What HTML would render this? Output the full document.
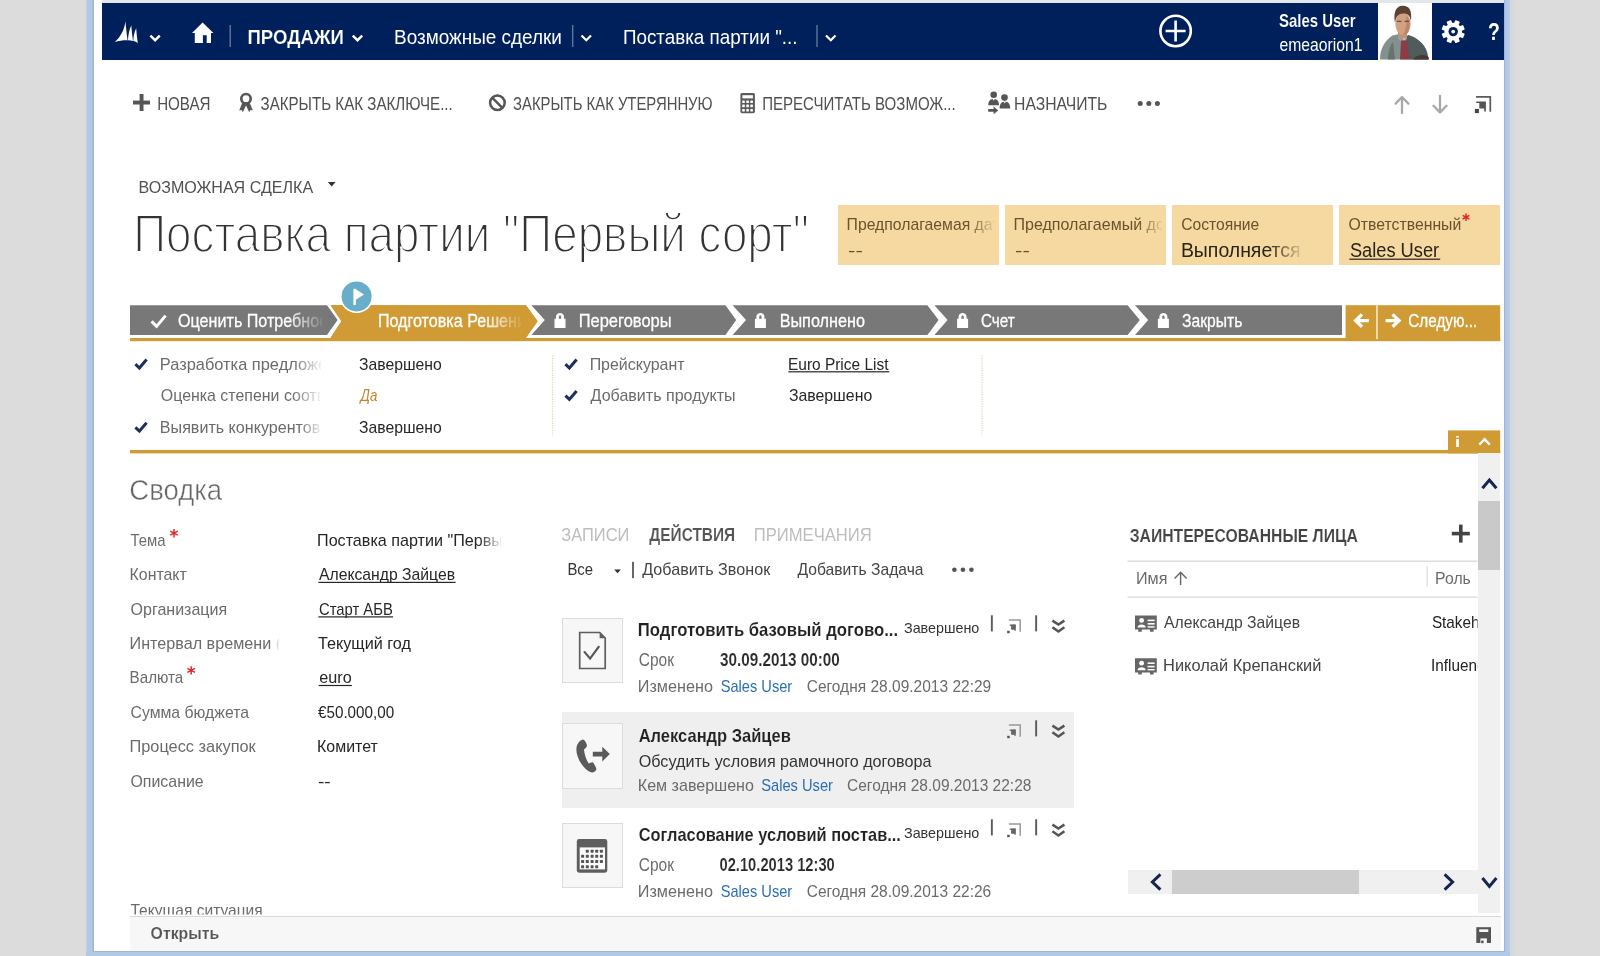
<!DOCTYPE html>
<html><head><meta charset="utf-8"><title>CRM</title>
<style>
html,body{margin:0;padding:0}
body{width:1600px;height:956px;overflow:hidden;position:relative;background:#dcdcdc;font-family:"Liberation Sans", sans-serif}
.b{position:absolute}
svg{position:absolute;overflow:visible}
text{white-space:pre}
</style></head><body>
<!-- window frame -->
<div class="b" style="left:86.4px;top:0;width:1424px;height:956px;background:linear-gradient(to right,#c3d2e6 0,#b2c8e7 1.6px,#b2c8e7 6.2px,#9fb6d3 6.8px,#9fb6d3 7.6px,#fff 7.6px,#fff 1417.9px,#9fb6d3 1417.9px,#9fb6d3 1419px,#b2c8e7 1419.6px,#b2c8e7 1423px,#c3d2e6 1424px)"></div>
<div class="b" style="left:1510.4px;top:0;width:7px;height:956px;background:linear-gradient(to right,#d3d7dd,#dcdcdc)"></div>
<div class="b" style="left:94px;top:0;width:1410.3px;height:950.6px;background:#fff"></div>
<div class="b" style="left:94px;top:950.6px;width:1410.3px;height:1.2px;background:#9fb6d3"></div>
<div class="b" style="left:86.4px;top:951.8px;width:1424px;height:4.2px;background:#b2c8e7"></div>
<div class="b" style="left:102px;top:0;width:1402px;height:3px;background:#e3e6ea"></div>
<!-- nav -->
<div class="b" style="left:102px;top:3px;width:1402px;height:56.6px;background:#00205b"></div>
<div class="b" style="left:1377.5px;top:3px;width:54.2px;height:56.6px;background:#fff"></div>
<svg id="nav" width="1600" height="70" style="left:0;top:0" viewBox="0 0 1600 70">
  <!-- logo sails -->
  <g fill="#fff">
    <path d="M125.4,21.2 C124.4,30 120.4,37 114.8,42 C119,40.8 124,40.2 127.6,40.4 C126.6,33 126,27 125.4,21.2 Z"/>
    <path d="M131.3,25.4 C129.2,29.4 128.2,35 128,40.3 C130,40.3 131.6,40.5 133,40.9 C132.2,35 131.7,30 131.3,25.4 Z"/>
    <path d="M136.2,28.2 C134.2,32 133.4,37 133.3,41.1 C135,41.5 136.4,42.1 137.8,43.2 C137,38 136.5,33 136.2,28.2 Z"/>
  </g>
  <polyline points="150.4,35.6 155.1,40.2 159.8,35.6" fill="none" stroke="#fff" stroke-width="2.4"/>
  <!-- home -->
  <g fill="#fff">
    <path d="M202.6,22.4 L192,33 L194.8,33 L194.8,43 L202.9,43 L202.9,35.2 L206.7,35.2 L206.7,43 L211,43 L211,33 L213.4,33 Z"/>
  </g>
  <rect x="229.5" y="25" width="1.4" height="22" fill="#62749a"/>
  <polyline points="352.8,35.6 357.5,40.2 362.2,35.6" fill="none" stroke="#fff" stroke-width="2.4"/>
  <rect x="572" y="25" width="1.4" height="22" fill="#62749a"/>
  <polyline points="581.5,35.5 586.3,40.3 591,35.5" fill="none" stroke="#fff" stroke-width="2.2"/>
  <rect x="816.3" y="25" width="1.4" height="22" fill="#62749a"/>
  <polyline points="826,35.5 830.8,40.3 835.5,35.5" fill="none" stroke="#fff" stroke-width="2.2"/>
  <!-- circle plus -->
  <circle cx="1175.6" cy="31" r="15.2" fill="none" stroke="#fff" stroke-width="2.6"/>
  <path d="M1165.6,31 H1185.6 M1175.6,20.6 V41.4" stroke="#fff" stroke-width="2.6" fill="none"/>
  <!-- avatar -->
  <g>
    <path d="M1380,59.6 C1380,50 1384,41 1392.5,35.6 L1399,34 L1404,40 L1408,35 C1416,37 1424,43 1427,52 L1428.6,59.6 Z" fill="#82918d"/>
    <path d="M1405,40 L1408,35 C1416,37 1424,43 1427,52 L1428.6,59.6 L1409.4,59.6 Z" fill="#505b5b"/>
    <path d="M1388,59.6 C1388,52 1390,46 1393,42 L1395,59.6 Z" fill="#66736f"/>
    <rect x="1398" y="29" width="9" height="9.6" fill="#c39173"/>
    <path d="M1398,36.6 L1404,41 L1407,36.6 L1407,38.8 L1404,43 L1398,38.8 Z" fill="#9aa6a4"/>
    <path d="M1401,40.4 L1407,40.4 L1409.6,59.6 L1400,59.6 Z" fill="#8c3c46"/>
    <ellipse cx="1403" cy="23.6" rx="7.7" ry="11.2" fill="#d2a182"/>
    <path d="M1406,16 C1410,18 1411,26 1408,33 C1406,35 1404,35 1403,34.6 C1406,30 1407,22 1406,16 Z" fill="#b9876a"/>
    <path d="M1394.8,22 C1393,9.6 1398,5.6 1403,5.8 C1409.4,6 1412.2,10.4 1410.9,21 C1410,15 1407,13.2 1403,13.6 C1399,14 1396.2,15.4 1395.2,22 Z" fill="#5a4131"/>
    <path d="M1397,21.4 H1401.4 M1404.6,21.4 H1409" stroke="#6e4c3a" stroke-width="1.1"/>
    <path d="M1413,59.6 C1415.6,55 1424,53.4 1428.6,57 L1428.6,59.6 Z" fill="#4a3933"/>
  </g>
  <!-- gear -->
  <g transform="translate(1453.2,31.6)" fill="#fff">
    <circle r="8.8"/>
    <g transform="rotate(22.5)">
      <rect x="-2.5" y="-11.6" width="5" height="23.2" rx="0.8"/>
      <rect x="-2.5" y="-11.6" width="5" height="23.2" rx="0.8" transform="rotate(45)"/>
      <rect x="-2.5" y="-11.6" width="5" height="23.2" rx="0.8" transform="rotate(90)"/>
      <rect x="-2.5" y="-11.6" width="5" height="23.2" rx="0.8" transform="rotate(135)"/>
    </g>
    <circle r="4.7" fill="#00205b"/>
    <circle r="1.9" fill="#fff"/>
  </g>
</svg>
<!-- command bar icons -->
<svg width="1600" height="140" style="left:0;top:0" viewBox="0 0 1600 140">
  <g fill="#555">
    <rect x="133" y="100.6" width="17" height="3.9"/><rect x="139.6" y="94" width="3.9" height="17"/>
  </g>
  <!-- ribbon -->
  <g>
    <circle cx="246" cy="98.7" r="4.7" fill="none" stroke="#585858" stroke-width="2.7"/>
    <path d="M242.4,102.6 L239.2,110.4 L241.7,110 L242.9,112.3 L246.2,105 L246,103.4 Z" fill="#585858"/>
    <path d="M249.6,102.6 L252.9,110.4 L250.4,110 L249.2,112.3 L245.8,105 L246,103.4 Z" fill="#585858"/>
  </g>
  <!-- ban -->
  <g fill="none" stroke="#555" stroke-width="2.5">
    <circle cx="497.4" cy="102.8" r="7.3"/>
    <path d="M492.4,97.8 L502.4,107.8"/>
  </g>
  <!-- calculator -->
  <g>
    <rect x="740.4" y="92.9" width="14.5" height="20.3" rx="1.6" fill="#5a5a5a"/>
    <rect x="742.4" y="95.2" width="10.5" height="3.2" fill="#fff"/>
    <g fill="#fff"><rect x="742.2" y="100.4" width="2.6" height="2.6" rx="0.5"/><rect x="746.3" y="100.4" width="2.6" height="2.6" rx="0.5"/><rect x="750.3" y="100.4" width="2.6" height="2.6" rx="0.5"/><rect x="742.2" y="104.6" width="2.6" height="2.6" rx="0.5"/><rect x="746.3" y="104.6" width="2.6" height="2.6" rx="0.5"/><rect x="750.3" y="104.6" width="2.6" height="2.6" rx="0.5"/><rect x="742.2" y="108.9" width="2.6" height="2.6" rx="0.5"/><rect x="746.3" y="108.9" width="2.6" height="2.6" rx="0.5"/><rect x="750.3" y="108.9" width="2.6" height="2.6" rx="0.5"/></g>
  </g>
  <!-- assign -->
  <g fill="#555">
    <circle cx="993.7" cy="94.8" r="3.3"/>
    <path d="M988.2,105.3 C988.2,100.6 990.4,98.9 993.6,98.9 C996.8,98.9 999,100.6 999,105.3 Z"/>
    <circle cx="1004.5" cy="97.6" r="3.3"/>
    <path d="M999.6,108.4 C999.6,103.6 1001.6,101.7 1004.9,101.7 C1008.2,101.7 1010.2,103.6 1010.2,108.4 Z"/>
    <path d="M988.2,109 H993.6 V106.6 L998.2,110.4 L993.6,114.3 V111.8 H988.2 Z"/>
  </g>
  <g fill="#fff"><path d="M992.6,99 H994.8 L993.7,100.8 Z"/><path d="M1003.6,101.8 H1005.8 L1004.7,103.6 Z"/></g>
  <g fill="#555"><circle cx="1140.2" cy="103.6" r="2.5"/><circle cx="1148.8" cy="103.6" r="2.5"/><circle cx="1157.4" cy="103.6" r="2.5"/></g>
  <g fill="none" stroke="#a8a8a8" stroke-width="2.3" stroke-linecap="round" stroke-linejoin="round">
    <path d="M1402,113 V97.2 M1395.6,103.6 L1402,97 L1408.4,103.6"/>
    <path d="M1440,96 V112 M1433.4,105.8 L1440,112.4 L1446.6,105.8"/>
  </g>
  <!-- popout -->
  <g>
    <path d="M1476,96.8 H1490.3 V111.7" fill="none" stroke="#5a5a5a" stroke-width="1.7"/>
    <path d="M1476.2,101.5 H1485.9 V111.4 H1484.2 V108.4 H1479.3 V103 H1476.2 Z" fill="#555"/>
    <rect x="1474.9" y="108.9" width="4" height="4.2" fill="#444"/>
  </g>
</svg>
<!-- header arrow -->
<svg width="20" height="10" style="left:326px;top:180px" viewBox="326 180 20 10"><path d="M327.8,182 H335.6 L331.7,186.4 Z" fill="#333"/></svg>
<!-- tiles -->
<div class="b" style="left:838px;top:205.3px;width:161px;height:59.5px;background:#f5d9a0"></div>
<div class="b" style="left:1005px;top:205.3px;width:160.8px;height:59.5px;background:#f5d9a0"></div>
<div class="b" style="left:1172px;top:205.3px;width:160.8px;height:59.5px;background:#f5d9a0"></div>
<div class="b" style="left:1339px;top:205.3px;width:161.2px;height:59.5px;background:#f5d9a0"></div>
<svg width="12" height="10" style="left:1461px;top:212px" viewBox="1461 212 12 10"><path d="M1466,213.4 V221 M1462.6,215.4 L1469.4,219 M1469.4,215.4 L1462.6,219" stroke="#e02b2b" stroke-width="1.5" fill="none"/></svg>
<!-- process bar -->
<svg width="1600" height="180" style="left:0;top:280px" viewBox="0 280 1600 180">
  <rect x="130" y="338" width="1370.2" height="3.2" fill="#d09a35"/>
  <g fill="#787878">
    <path d="M130,305.2 H327 L337.6,320.1 L327,335 H130 Z"/>
    <path d="M531.4,305.2 H725.4 L736.2,320.1 L725.4,335 H531.4 L544.8,320.1 Z"/>
    <path d="M732.6,305.2 H927.4 L938.6,320.1 L927.4,335 H732.6 L746,320.1 Z"/>
    <path d="M934.4,305.2 H1127.6 L1139.8,320.1 L1127.6,335 H934.4 L947.6,320.1 Z"/>
    <path d="M1135,305.2 H1342 V335 H1135 L1148.2,320.1 Z"/>
  </g>
  <path d="M330.6,305.2 H526 L537.6,321 L526,337.4 H130 V337.4 H330.6 L341.4,321 Z" fill="#d09a35"/>
  <path d="M330.6,305.2 H526 L537.6,321.4 L526,338 H330.6 L341.6,321.4 Z" fill="#d09a35"/>
  <rect x="1345.6" y="305.2" width="154.6" height="35.8" fill="#d09a35"/>
  <rect x="1376" y="305.2" width="1.9" height="34" fill="#f1dcb0"/>
  <!-- flag circle -->
  <circle cx="356.6" cy="296.4" r="16.6" fill="#fff"/>
  <circle cx="356.6" cy="296.4" r="15" fill="#68aecb"/>
  <path d="M353.4,288.8 H355.9 V305 H353.4 Z" fill="#fff"/>
  <path d="M355,288.8 L364,294.6 L355,300.2 Z" fill="#fff"/>
  <!-- check -->
  <polyline points="151.6,321.4 156.6,326.4 165.6,315.6" fill="none" stroke="#fff" stroke-width="3"/>
  <!-- locks -->
  <g id="lock1" fill="#fff">
    <path d="M554.5,318.8 H565.5 V327.9 H554.5 Z M556,318.8 V316.8 C556,311.8 564,311.8 564,316.8 V318.8 H561.2 V317 C561.2,315 558.8,315 558.8,317 V318.8 Z"/>
  </g>
  <use href="#lock1" x="200.4"/>
  <use href="#lock1" x="402.6"/>
  <use href="#lock1" x="603.4"/>
  <!-- arrows -->
  <g fill="none" stroke="#fff" stroke-width="3.3">
    <path d="M1368.8,320.6 H1357 M1362,314.4 L1355.6,320.6 L1362,326.8"/>
    <path d="M1385.6,320.6 H1397.4 M1392.6,314.4 L1399,320.6 L1392.6,326.8"/>
  </g>
  <!-- field checks -->
  <g fill="none" stroke="#1e2f5e" stroke-width="3" stroke-linejoin="miter">
    <polyline points="135.4,364.2 139.4,368 146.6,359.6"/>
    <polyline points="135.4,427.4 139.4,431.2 146.6,422.8"/>
    <polyline points="565.4,364.2 569.4,368 576.6,359.6"/>
    <polyline points="565.4,395.6 569.4,399.4 576.6,391"/>
  </g>
  <path d="M552.6,355.6 V435.6 M982,355.6 V435.6" stroke="#e3d3b3" stroke-width="1.2" stroke-dasharray="1.2 1.2" fill="none"/>
  <rect x="130" y="450" width="1370.2" height="3.4" fill="#d09a35"/>
  <rect x="1448" y="430.4" width="52.2" height="23" fill="#d09a35"/>
  <polyline points="1479.4,444.6 1484.6,439.2 1489.8,444.6" fill="none" stroke="#fff" stroke-width="2.4"/>
</svg>
<!-- scrollbars -->
<div class="b" style="left:1477.6px;top:453.4px;width:22.8px;height:459.4px;background:#f0f0f0"></div>
<div class="b" style="left:1477.6px;top:500.6px;width:22.8px;height:69px;background:#c9c9c9"></div>
<div class="b" style="left:1127.5px;top:870.3px;width:350.1px;height:23.4px;background:#f0f0f0"></div>
<div class="b" style="left:1172px;top:870.3px;width:186.8px;height:23.4px;background:#cdcdcd"></div>
<svg width="400" height="460" style="left:1120px;top:470px" viewBox="1120 470 400 460">
  <g fill="none" stroke="#14264f" stroke-width="3">
    <polyline points="1482.4,488.2 1489.4,480 1496.4,488.2"/>
    <polyline points="1482.4,878 1489.4,886.4 1496.4,878"/>
    <polyline points="1160.4,874.4 1152.4,882 1160.4,889.6"/>
    <polyline points="1444.6,874.4 1452.6,882 1444.6,889.6"/>
  </g>
  <!-- plus -->
  <g fill="#444"><rect x="1451.8" y="531.8" width="18" height="3.6"/><rect x="1459" y="524.6" width="3.6" height="18"/></g>
  <rect x="1127.5" y="560.5" width="350.1" height="1.4" fill="#dcdcdc"/>
  <rect x="1127.5" y="596.4" width="350.1" height="1.4" fill="#dcdcdc"/>
  <rect x="1426.6" y="566" width="1.2" height="20.5" fill="#dcdcdc"/>
  <!-- sort arrow -->
  <path d="M1180.6,585 V572.6 M1174.6,578.4 L1180.6,572.2 L1186.6,578.4" fill="none" stroke="#666" stroke-width="1.4"/>
  <!-- contact icons -->
  <g id="cicon" fill="#666">
    <path d="M1135,615.4 H1156.8 V629.6 H1153.6 V631.8 H1150 V629.6 H1141.8 V631.8 H1138.2 V629.6 H1135 Z"/>
    <circle cx="1141.6" cy="620.4" r="2.4" fill="#fff"/>
    <path d="M1137.6,627.4 C1137.6,623.6 1145.6,623.6 1145.6,627.4 Z" fill="#fff"/>
    <rect x="1147.6" y="619.6" width="7" height="1.6" fill="#fff"/>
    <rect x="1147.6" y="623" width="7" height="1.6" fill="#fff"/>
    <rect x="1147.6" y="626.2" width="7" height="1.4" fill="#fff"/>
  </g>
  <use href="#cicon" y="42.8"/>
</svg>
<!-- tabs misc -->
<svg width="600" height="80" style="left:550px;top:540px" viewBox="550 540 600 80">
  <path d="M614.2,569.4 H620.8 L617.5,573.2 Z" fill="#333"/>
  <rect x="632.2" y="561.8" width="1.6" height="16.4" fill="#444"/>
  <g fill="#555"><circle cx="954.4" cy="569.8" r="2.3"/><circle cx="962.9" cy="569.8" r="2.3"/><circle cx="971.4" cy="569.8" r="2.3"/></g>
</svg>
<!-- activities -->
<div class="b" style="left:561.7px;top:712.2px;width:512.1px;height:95.6px;background:#efefef"></div>
<div class="b" style="left:561.7px;top:617.7px;width:61.5px;height:65.6px;background:#f7f7f7;box-sizing:border-box;border:1.3px solid #dcdcdc"></div>
<div class="b" style="left:561.7px;top:723.4px;width:61.5px;height:65.6px;background:#f7f7f7;box-sizing:border-box;border:1.3px solid #dcdcdc"></div>
<div class="b" style="left:561.7px;top:823px;width:61.5px;height:65.2px;background:#f7f7f7;box-sizing:border-box;border:1.3px solid #dcdcdc"></div>
<svg width="560" height="300" style="left:550px;top:600px" viewBox="550 600 560 300">
  <!-- doc check -->
  <path d="M579.7,632.5 H599.8 L605.2,638 V668.5 H579.7 Z" fill="none" stroke="#5e5e5e" stroke-width="1.7"/>
  <path d="M599.6,632.3 L605.4,638.2 H599.6 Z" fill="#5e5e5e"/>
  <polyline points="584,651.4 590.1,658.6 599.2,646.2" fill="none" stroke="#555" stroke-width="2.2"/>
  <!-- phone -->
  <g fill="#5a5a5a">
    <path d="M583,739.6 C581,739.8 577.5,742.5 576.6,747 C575.6,752 578,760 583,766 C586.5,770.5 590,772.6 592.5,772.4 C594.5,772.2 596.4,770.4 596.4,769 C596.4,767.6 594,763.4 593,762.4 C592,761.6 589.6,763.2 588.8,763.6 C586.8,761 584.4,755 584,749.6 C585.2,748.6 587,747 587,745.6 C587,744 584.6,739.6 583,739.6 Z"/>
    <path d="M592.8,751.8 H602.3 V746.8 L609.8,754 L602.3,761.4 V756.4 H592.8 Z"/>
  </g>
  <!-- calendar -->
  <g>
    <rect x="576.8" y="839.1" width="30.5" height="33.6" rx="2.4" fill="#5e5e5e"/>
    <rect x="579.7" y="847.4" width="25.3" height="22" fill="#fafafa"/>
    <g fill="#555"><rect x="585.8" y="849.7" width="3" height="3" rx="0.6"/><rect x="590.6" y="849.7" width="3" height="3" rx="0.6"/><rect x="595.2" y="849.7" width="3" height="3" rx="0.6"/><rect x="599.9" y="849.7" width="3" height="3" rx="0.6"/><rect x="581.1" y="854.8" width="3" height="3" rx="0.6"/><rect x="585.8" y="854.8" width="3" height="3" rx="0.6"/><rect x="590.6" y="854.8" width="3" height="3" rx="0.6"/><rect x="595.2" y="854.8" width="3" height="3" rx="0.6"/><rect x="599.9" y="854.8" width="3" height="3" rx="0.6"/><rect x="581.1" y="860.0" width="3" height="3" rx="0.6"/><rect x="585.8" y="860.0" width="3" height="3" rx="0.6"/><rect x="590.6" y="860.0" width="3" height="3" rx="0.6"/><rect x="595.2" y="860.0" width="3" height="3" rx="0.6"/><rect x="599.9" y="860.0" width="3" height="3" rx="0.6"/><rect x="581.1" y="865.3" width="3" height="3" rx="0.6"/><rect x="585.8" y="865.3" width="3" height="3" rx="0.6"/><rect x="590.6" y="865.3" width="3" height="3" rx="0.6"/><rect x="595.2" y="865.3" width="3" height="3" rx="0.6"/></g>
  </g>
  <!-- row controls -->
  <g id="ctl">
    <path d="M1008.9,620 H1020.2 V631.7" fill="none" stroke="#999" stroke-width="1.5"/>
    <path d="M1009.7,624.6 H1015.7 V631.1 H1014.4 V629.4 H1011.4 V625.9 H1009.7 Z" fill="#777"/>
    <rect x="1011.2" y="624.6" width="4.5" height="5" fill="#666"/>
    <rect x="1007.2" y="630.8" width="2.5" height="2.4" fill="#555"/>
    <rect x="1035.2" y="615.3" width="1.9" height="16.1" fill="#5a5a5a"/>
    <polyline points="1052.4,620.6 1058.4,624.6 1064.4,620.6" fill="none" stroke="#555" stroke-width="2.5"/>
    <polyline points="1052.4,627.2 1058.4,631.4 1064.4,627.2" fill="none" stroke="#555" stroke-width="2.5"/>
  </g>
  <rect x="990.9" y="615.3" width="1.9" height="16.1" fill="#5a5a5a"/>
  <use href="#ctl" y="105"/>
  <use href="#ctl" y="204"/>
  <rect x="990.9" y="819.3" width="1.9" height="16.1" fill="#5a5a5a"/>
</svg>
<!-- red asterisks -->
<svg width="80" height="160" style="left:160px;top:520px" viewBox="160 520 80 160">
  <g stroke="#e02b2b" stroke-width="1.5" fill="none">
    <path d="M174,529 V537.4 M170.2,531.2 L177.8,535.2 M177.8,531.2 L170.2,535.2"/>
    <path d="M191.2,666.2 V674.6 M187.4,668.4 L195,672.4 M195,668.4 L187.4,672.4"/>
  </g>
</svg>

<svg width="1600" height="956" style="left:0;top:0;opacity:0.999" viewBox="0 0 1600 956" font-family='"Liberation Sans", sans-serif' xml:space="preserve">
<defs><linearGradient id="g13" gradientUnits="userSpaceOnUse" x1="968.0" y1="0" x2="994.0" y2="0"><stop offset="0" stop-color="#fff"/><stop offset="1" stop-color="#fff" stop-opacity="0.1"/></linearGradient><mask id="m13" maskUnits="userSpaceOnUse" x="845.5" y="211.3" width="148.5" height="25.5"><rect x="845.5" y="211.3" width="148.5" height="25.5" fill="url(#g13)"/></mask><linearGradient id="g15" gradientUnits="userSpaceOnUse" x1="1138.0" y1="0" x2="1162.0" y2="0"><stop offset="0" stop-color="#fff"/><stop offset="1" stop-color="#fff" stop-opacity="0.1"/></linearGradient><mask id="m15" maskUnits="userSpaceOnUse" x="1012.5" y="211.3" width="149.5" height="25.5"><rect x="1012.5" y="211.3" width="149.5" height="25.5" fill="url(#g15)"/></mask><linearGradient id="g18" gradientUnits="userSpaceOnUse" x1="1268.0" y1="0" x2="1302.0" y2="0"><stop offset="0" stop-color="#fff"/><stop offset="1" stop-color="#fff" stop-opacity="0.1"/></linearGradient><mask id="m18" maskUnits="userSpaceOnUse" x="1179.9" y="235.6" width="122.1" height="29.2"><rect x="1179.9" y="235.6" width="122.1" height="29.2" fill="url(#g18)"/></mask><linearGradient id="g21" gradientUnits="userSpaceOnUse" x1="288.0" y1="0" x2="322.0" y2="0"><stop offset="0" stop-color="#fff"/><stop offset="1" stop-color="#fff" stop-opacity="0.1"/></linearGradient><mask id="m21" maskUnits="userSpaceOnUse" x="176.0" y="306.1" width="146.0" height="28.5"><rect x="176.0" y="306.1" width="146.0" height="28.5" fill="url(#g21)"/></mask><linearGradient id="g22" gradientUnits="userSpaceOnUse" x1="485.0" y1="0" x2="521.0" y2="0"><stop offset="0" stop-color="#fff"/><stop offset="1" stop-color="#fff" stop-opacity="0.1"/></linearGradient><mask id="m22" maskUnits="userSpaceOnUse" x="376.8" y="306.1" width="144.2" height="28.5"><rect x="376.8" y="306.1" width="144.2" height="28.5" fill="url(#g22)"/></mask><linearGradient id="g28" gradientUnits="userSpaceOnUse" x1="293.0" y1="0" x2="321.0" y2="0"><stop offset="0" stop-color="#fff"/><stop offset="1" stop-color="#fff" stop-opacity="0.1"/></linearGradient><mask id="m28" maskUnits="userSpaceOnUse" x="158.8" y="350.9" width="162.2" height="25.5"><rect x="158.8" y="350.9" width="162.2" height="25.5" fill="url(#g28)"/></mask><linearGradient id="g30" gradientUnits="userSpaceOnUse" x1="292.0" y1="0" x2="320.0" y2="0"><stop offset="0" stop-color="#fff"/><stop offset="1" stop-color="#fff" stop-opacity="0.1"/></linearGradient><mask id="m30" maskUnits="userSpaceOnUse" x="158.8" y="382.1" width="161.2" height="25.5"><rect x="158.8" y="382.1" width="161.2" height="25.5" fill="url(#g30)"/></mask><linearGradient id="g32" gradientUnits="userSpaceOnUse" x1="299.0" y1="0" x2="321.0" y2="0"><stop offset="0" stop-color="#fff"/><stop offset="1" stop-color="#fff" stop-opacity="0.1"/></linearGradient><mask id="m32" maskUnits="userSpaceOnUse" x="158.8" y="413.9" width="162.2" height="25.5"><rect x="158.8" y="413.9" width="162.2" height="25.5" fill="url(#g32)"/></mask><linearGradient id="g43" gradientUnits="userSpaceOnUse" x1="270.0" y1="0" x2="279.0" y2="0"><stop offset="0" stop-color="#fff"/><stop offset="1" stop-color="#fff" stop-opacity="0.1"/></linearGradient><mask id="m43" maskUnits="userSpaceOnUse" x="128.5" y="630.3" width="150.5" height="25.5"><rect x="128.5" y="630.3" width="150.5" height="25.5" fill="url(#g43)"/></mask><clipPath id="c48"><rect x="128.5" y="897.7" width="141.5" height="16.8"/></clipPath><linearGradient id="g49" gradientUnits="userSpaceOnUse" x1="479.0" y1="0" x2="501.0" y2="0"><stop offset="0" stop-color="#fff"/><stop offset="1" stop-color="#fff" stop-opacity="0.1"/></linearGradient><mask id="m49" maskUnits="userSpaceOnUse" x="316.0" y="527.1" width="185.0" height="25.5"><rect x="316.0" y="527.1" width="185.0" height="25.5" fill="url(#g49)"/></mask><clipPath id="c86"><rect x="1429.9" y="609.1" width="47.6" height="25.5"/></clipPath><clipPath id="c88"><rect x="1430.0" y="651.9" width="47.5" height="25.5"/></clipPath></defs>
<text x="247.47" y="44.00" font-size="20" fill="#ffffff" textLength="96.48" lengthAdjust="spacingAndGlyphs" font-weight="bold" stroke="#00205b" stroke-width="0.15">ПРОДАЖИ</text>
<text x="394.08" y="44.40" font-size="20.5" fill="#ffffff" textLength="167.84" lengthAdjust="spacingAndGlyphs">Возможные сделки</text>
<text x="622.88" y="44.40" font-size="20.5" fill="#ffffff" textLength="174.68" lengthAdjust="spacingAndGlyphs">Поставка партии &quot;...</text>
<text x="1279.00" y="27.00" font-size="18" fill="#ffffff" textLength="76.60" lengthAdjust="spacingAndGlyphs" font-weight="bold" stroke="#00205b" stroke-width="0.1">Sales User</text>
<text x="1279.40" y="51.00" font-size="18.5" fill="#ffffff" textLength="83.05" lengthAdjust="spacingAndGlyphs">emeaorion1</text>
<text x="1487.89" y="40.40" font-size="24" fill="#ffffff" textLength="11.84" lengthAdjust="spacingAndGlyphs" font-weight="bold">?</text>
<text x="157.13" y="110.00" font-size="17.5" fill="#505050" textLength="53.42" lengthAdjust="spacingAndGlyphs">НОВАЯ</text>
<text x="260.50" y="110.00" font-size="17.5" fill="#505050" textLength="192.24" lengthAdjust="spacingAndGlyphs">ЗАКРЫТЬ КАК ЗАКЛЮЧЕ...</text>
<text x="513.00" y="110.00" font-size="17.5" fill="#505050" textLength="199.58" lengthAdjust="spacingAndGlyphs">ЗАКРЫТЬ КАК УТЕРЯННУЮ</text>
<text x="762.14" y="110.00" font-size="17.5" fill="#505050" textLength="193.60" lengthAdjust="spacingAndGlyphs">ПЕРЕСЧИТАТЬ ВОЗМОЖ...</text>
<text x="1014.10" y="110.00" font-size="17.5" fill="#505050" textLength="93.33" lengthAdjust="spacingAndGlyphs">НАЗНАЧИТЬ</text>
<text x="138.56" y="193.00" font-size="17" fill="#505050" textLength="174.57" lengthAdjust="spacingAndGlyphs">ВОЗМОЖНАЯ СДЕЛКА</text>
<text x="133.24" y="251.50" font-size="54.4" fill="#333" textLength="675.70" lengthAdjust="spacingAndGlyphs" stroke="#fff" stroke-width="2">Поставка партии &quot;Первый сорт&quot;</text>
<g mask="url(#m13)"><text x="846.57" y="230.00" font-size="17" fill="#67532c" textLength="161.40" lengthAdjust="spacingAndGlyphs">Предполагаемая дата</text></g>
<text x="848.00" y="256.00" font-size="17" fill="#67532c" textLength="14.87" lengthAdjust="spacingAndGlyphs">--</text>
<g mask="url(#m15)"><text x="1013.56" y="230.00" font-size="17" fill="#67532c" textLength="176.87" lengthAdjust="spacingAndGlyphs">Предполагаемый доход</text></g>
<text x="1015.00" y="256.00" font-size="17" fill="#67532c" textLength="14.87" lengthAdjust="spacingAndGlyphs">--</text>
<text x="1181.20" y="229.50" font-size="17" fill="#67532c" textLength="78.12" lengthAdjust="spacingAndGlyphs">Состояние</text>
<g mask="url(#m18)"><text x="1180.90" y="257.00" font-size="19.5" fill="#2a2418" textLength="119.66" lengthAdjust="spacingAndGlyphs">Выполняется</text></g>
<text x="1348.60" y="229.50" font-size="17" fill="#67532c" textLength="112.66" lengthAdjust="spacingAndGlyphs">Ответственный</text>
<text x="1349.90" y="257.00" font-size="19.5" fill="#2a2418" textLength="89.23" lengthAdjust="spacingAndGlyphs">Sales User</text><rect x="1349.30" y="258.60" width="90.90" height="1.2" fill="#2a2418"/>
<g mask="url(#m21)"><text x="178.00" y="327.00" font-size="19" fill="#ffffff" textLength="165.69" lengthAdjust="spacingAndGlyphs" stroke="#fff" stroke-width="0.3">Оценить Потребности</text></g>
<g mask="url(#m22)"><text x="377.90" y="327.00" font-size="19" fill="#ffffff" textLength="156.73" lengthAdjust="spacingAndGlyphs" stroke="#fff" stroke-width="0.3">Подготовка Решения</text></g>
<text x="578.63" y="327.00" font-size="19" fill="#ffffff" textLength="92.94" lengthAdjust="spacingAndGlyphs" stroke="#fff" stroke-width="0.3">Переговоры</text>
<text x="779.65" y="327.00" font-size="19" fill="#ffffff" textLength="85.34" lengthAdjust="spacingAndGlyphs" stroke="#fff" stroke-width="0.3">Выполнено</text>
<text x="981.00" y="327.00" font-size="19" fill="#ffffff" textLength="33.76" lengthAdjust="spacingAndGlyphs" stroke="#fff" stroke-width="0.3">Счет</text>
<text x="1182.00" y="327.00" font-size="19" fill="#ffffff" textLength="60.42" lengthAdjust="spacingAndGlyphs" stroke="#fff" stroke-width="0.3">Закрыть</text>
<text x="1408.30" y="327.40" font-size="18.5" fill="#ffffff" textLength="68.84" lengthAdjust="spacingAndGlyphs" stroke="#fff" stroke-width="0.3">Следую...</text>
<g mask="url(#m28)"><text x="159.83" y="369.60" font-size="17" fill="#6b6b6b" textLength="194.30" lengthAdjust="spacingAndGlyphs">Разработка предложения</text></g>
<text x="359.00" y="369.60" font-size="17" fill="#262626" textLength="82.82" lengthAdjust="spacingAndGlyphs">Завершено</text>
<g mask="url(#m30)"><text x="160.80" y="400.80" font-size="17" fill="#6b6b6b" textLength="220.86" lengthAdjust="spacingAndGlyphs">Оценка степени соответствия</text></g>
<text x="360.57" y="400.80" font-size="17" fill="#c8802d" textLength="16.79" lengthAdjust="spacingAndGlyphs" font-style="italic">Да</text>
<g mask="url(#m32)"><text x="159.85" y="432.60" font-size="17" fill="#6b6b6b" textLength="160.38" lengthAdjust="spacingAndGlyphs">Выявить конкурентов</text></g>
<text x="359.00" y="432.60" font-size="17" fill="#262626" textLength="82.82" lengthAdjust="spacingAndGlyphs">Завершено</text>
<text x="589.66" y="369.60" font-size="17" fill="#6b6b6b" textLength="94.94" lengthAdjust="spacingAndGlyphs">Прейскурант</text>
<text x="787.99" y="369.60" font-size="17" fill="#262626" textLength="100.46" lengthAdjust="spacingAndGlyphs">Euro Price List</text><rect x="788.30" y="371.20" width="101.00" height="1.2" fill="#262626"/>
<text x="590.60" y="400.80" font-size="17" fill="#6b6b6b" textLength="145.01" lengthAdjust="spacingAndGlyphs">Добавить продукты</text>
<text x="788.90" y="400.80" font-size="17" fill="#262626" textLength="83.32" lengthAdjust="spacingAndGlyphs">Завершено</text>
<text x="1454.67" y="446.70" font-size="15" fill="#ffffff" textLength="5.56" lengthAdjust="spacingAndGlyphs" font-weight="bold">i</text>
<text x="129.26" y="500.20" font-size="29.4" fill="#646464" textLength="92.92" lengthAdjust="spacingAndGlyphs" stroke="#fff" stroke-width="0.5">Сводка</text>
<text x="130.50" y="545.80" font-size="17" fill="#6b6b6b" textLength="35.02" lengthAdjust="spacingAndGlyphs">Тема</text>
<text x="129.56" y="580.20" font-size="17" fill="#6b6b6b" textLength="57.24" lengthAdjust="spacingAndGlyphs">Контакт</text>
<text x="130.50" y="614.70" font-size="17" fill="#6b6b6b" textLength="96.69" lengthAdjust="spacingAndGlyphs">Организация</text>
<g mask="url(#m43)"><text x="129.55" y="649.00" font-size="17" fill="#6b6b6b" textLength="151.54" lengthAdjust="spacingAndGlyphs">Интервал времени (</text></g>
<text x="129.61" y="683.30" font-size="17" fill="#6b6b6b" textLength="53.66" lengthAdjust="spacingAndGlyphs">Валюта</text>
<text x="130.50" y="717.80" font-size="17" fill="#6b6b6b" textLength="118.49" lengthAdjust="spacingAndGlyphs">Сумма бюджета</text>
<text x="129.54" y="752.10" font-size="17" fill="#6b6b6b" textLength="126.17" lengthAdjust="spacingAndGlyphs">Процесс закупок</text>
<text x="130.50" y="786.70" font-size="17" fill="#6b6b6b" textLength="73.18" lengthAdjust="spacingAndGlyphs">Описание</text>
<g clip-path="url(#c48)"><text x="130.50" y="916.40" font-size="17" fill="#6b6b6b" textLength="132.19" lengthAdjust="spacingAndGlyphs">Текущая ситуация</text></g>
<g mask="url(#m49)"><text x="317.05" y="545.80" font-size="17" fill="#262626" textLength="194.81" lengthAdjust="spacingAndGlyphs">Поставка партии &quot;Первый</text></g>
<text x="319.00" y="580.20" font-size="17" fill="#262626" textLength="136.03" lengthAdjust="spacingAndGlyphs">Александр Зайцев</text><rect x="318.40" y="581.80" width="137.20" height="1.2" fill="#262626"/>
<text x="319.00" y="614.70" font-size="17" fill="#262626" textLength="73.80" lengthAdjust="spacingAndGlyphs">Старт АБВ</text><rect x="318.40" y="616.30" width="74.70" height="1.2" fill="#262626"/>
<text x="318.00" y="649.00" font-size="17" fill="#262626" textLength="92.92" lengthAdjust="spacingAndGlyphs">Текущий год</text>
<text x="319.25" y="683.30" font-size="17" fill="#262626" textLength="32.43" lengthAdjust="spacingAndGlyphs">euro</text><rect x="318.65" y="684.90" width="33.20" height="1.2" fill="#262626"/>
<text x="318.00" y="717.80" font-size="17" fill="#262626" textLength="76.16" lengthAdjust="spacingAndGlyphs">€50.000,00</text>
<text x="317.06" y="752.10" font-size="17" fill="#262626" textLength="60.74" lengthAdjust="spacingAndGlyphs">Комитет</text>
<text x="318.00" y="786.70" font-size="17" fill="#262626" textLength="12.74" lengthAdjust="spacingAndGlyphs">--</text>
<text x="561.20" y="541.30" font-size="17.5" fill="#bdbdbd" textLength="68.24" lengthAdjust="spacingAndGlyphs">ЗАПИСИ</text>
<text x="649.30" y="541.30" font-size="17.5" fill="#555" textLength="85.81" lengthAdjust="spacingAndGlyphs" font-weight="bold" stroke="#fff" stroke-width="0.12">ДЕЙСТВИЯ</text>
<text x="753.75" y="541.30" font-size="17.5" fill="#bdbdbd" textLength="118.06" lengthAdjust="spacingAndGlyphs">ПРИМЕЧАНИЯ</text>
<text x="567.42" y="575.00" font-size="17" fill="#333" textLength="25.67" lengthAdjust="spacingAndGlyphs">Все</text>
<text x="642.20" y="575.00" font-size="17" fill="#444" textLength="128.02" lengthAdjust="spacingAndGlyphs">Добавить Звонок</text>
<text x="797.50" y="575.00" font-size="17" fill="#444" textLength="126.00" lengthAdjust="spacingAndGlyphs">Добавить Задача</text>
<text x="637.87" y="636.30" font-size="19" fill="#222" textLength="260.25" lengthAdjust="spacingAndGlyphs" font-weight="bold" stroke="#fff" stroke-width="0.12">Подготовить базовый догово...</text>
<text x="904.00" y="633.40" font-size="15" fill="#333" textLength="75.33" lengthAdjust="spacingAndGlyphs">Завершено</text>
<text x="638.75" y="666.20" font-size="17.5" fill="#6b6b6b" textLength="35.20" lengthAdjust="spacingAndGlyphs">Срок</text>
<text x="720.00" y="666.20" font-size="17.5" fill="#2a2a2a" textLength="119.77" lengthAdjust="spacingAndGlyphs" font-weight="bold" stroke="#fff" stroke-width="0.12">30.09.2013 00:00</text>
<text x="637.80" y="692.00" font-size="17" fill="#6b6b6b" textLength="75.14" lengthAdjust="spacingAndGlyphs">Изменено</text>
<text x="720.75" y="692.00" font-size="17" fill="#2a6eb5" textLength="71.46" lengthAdjust="spacingAndGlyphs">Sales User</text>
<text x="806.70" y="692.00" font-size="17" fill="#6b6b6b" textLength="184.51" lengthAdjust="spacingAndGlyphs">Сегодня 28.09.2013 22:29</text>
<text x="638.70" y="741.80" font-size="19" fill="#222" textLength="152.14" lengthAdjust="spacingAndGlyphs" font-weight="bold" stroke="#efefef" stroke-width="0.12">Александр Зайцев</text>
<text x="638.70" y="767.00" font-size="17" fill="#333" textLength="292.78" lengthAdjust="spacingAndGlyphs">Обсудить условия рамочного договора</text>
<text x="637.75" y="790.50" font-size="17" fill="#6b6b6b" textLength="116.18" lengthAdjust="spacingAndGlyphs">Кем завершено</text>
<text x="761.20" y="790.50" font-size="17" fill="#2a6eb5" textLength="71.81" lengthAdjust="spacingAndGlyphs">Sales User</text>
<text x="847.00" y="790.50" font-size="17" fill="#6b6b6b" textLength="184.41" lengthAdjust="spacingAndGlyphs">Сегодня 28.09.2013 22:28</text>
<text x="638.70" y="841.00" font-size="19" fill="#222" textLength="262.20" lengthAdjust="spacingAndGlyphs" font-weight="bold" stroke="#fff" stroke-width="0.12">Согласование условий постав...</text>
<text x="904.00" y="838.10" font-size="15" fill="#333" textLength="75.33" lengthAdjust="spacingAndGlyphs">Завершено</text>
<text x="638.75" y="870.90" font-size="17.5" fill="#6b6b6b" textLength="35.20" lengthAdjust="spacingAndGlyphs">Срок</text>
<text x="719.50" y="870.90" font-size="17.5" fill="#2a2a2a" textLength="115.28" lengthAdjust="spacingAndGlyphs" font-weight="bold" stroke="#fff" stroke-width="0.12">02.10.2013 12:30</text>
<text x="637.80" y="896.80" font-size="17" fill="#6b6b6b" textLength="75.14" lengthAdjust="spacingAndGlyphs">Изменено</text>
<text x="720.75" y="896.80" font-size="17" fill="#2a6eb5" textLength="71.46" lengthAdjust="spacingAndGlyphs">Sales User</text>
<text x="806.70" y="896.80" font-size="17" fill="#6b6b6b" textLength="184.51" lengthAdjust="spacingAndGlyphs">Сегодня 28.09.2013 22:26</text>
<text x="1129.70" y="541.90" font-size="18" fill="#444" textLength="228.10" lengthAdjust="spacingAndGlyphs" font-weight="bold" stroke="#fff" stroke-width="0.12">ЗАИНТЕРЕСОВАННЫЕ ЛИЦА</text>
<text x="1135.95" y="584.00" font-size="17" fill="#6b6b6b" textLength="31.44" lengthAdjust="spacingAndGlyphs">Имя</text>
<text x="1435.07" y="584.00" font-size="17" fill="#6b6b6b" textLength="35.80" lengthAdjust="spacingAndGlyphs">Роль</text>
<text x="1164.00" y="627.80" font-size="17" fill="#444" textLength="136.03" lengthAdjust="spacingAndGlyphs">Александр Зайцев</text>
<g clip-path="url(#c86)"><text x="1431.90" y="627.80" font-size="17" fill="#222" textLength="81.65" lengthAdjust="spacingAndGlyphs">Stakeholder</text></g>
<text x="1163.03" y="670.60" font-size="17" fill="#444" textLength="158.45" lengthAdjust="spacingAndGlyphs">Николай Крепанский</text>
<g clip-path="url(#c88)"><text x="1431.10" y="670.60" font-size="17" fill="#222" textLength="67.19" lengthAdjust="spacingAndGlyphs">Influencer</text></g>
</svg>
<!-- footer -->
<div class="b" style="left:129.5px;top:915.6px;width:1371.5px;height:35.2px;background:#f7f7f7;border-top:1.4px solid #dadada;box-sizing:border-box"></div>
<svg width="20" height="20" style="left:1474px;top:925px" viewBox="1474 925 20 20">
  <rect x="1476.3" y="927.2" width="14.7" height="15.8" fill="#555"/>
  <rect x="1479.2" y="929.3" width="9.1" height="2.7" fill="#f7f7f7"/>
  <rect x="1480.4" y="938.4" width="6.5" height="4.8" fill="#f7f7f7"/>
  <rect x="1481.2" y="940.6" width="2.4" height="2.6" fill="#555"/>
</svg>

<svg width="1600" height="956" style="left:0;top:0;opacity:0.999" viewBox="0 0 1600 956" font-family='"Liberation Sans", sans-serif'><text x="150.60" y="939.40" font-size="17" fill="#555" textLength="68.57" lengthAdjust="spacingAndGlyphs" font-weight="bold" stroke="#f7f7f7" stroke-width="0.12">Открыть</text></svg>
</body></html>
